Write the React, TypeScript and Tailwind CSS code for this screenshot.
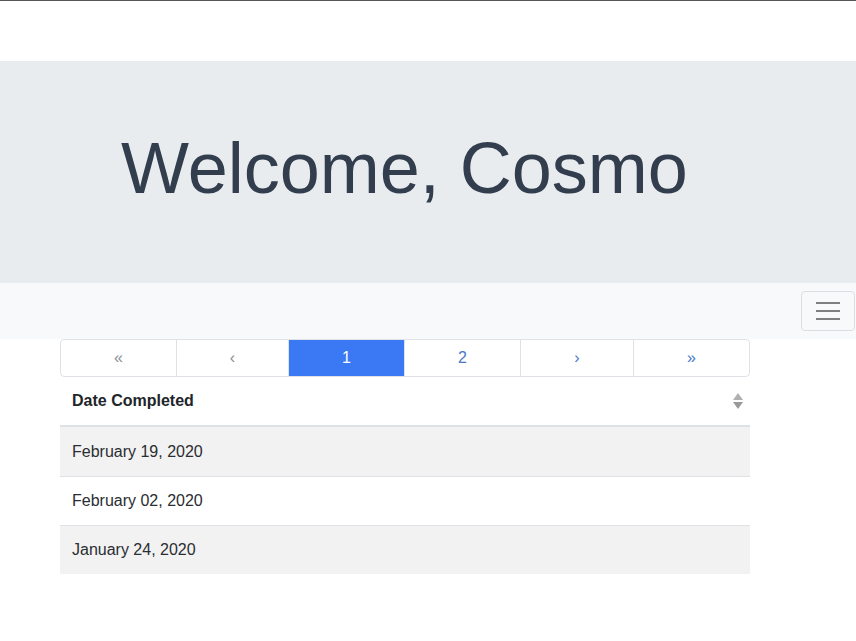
import React from "react";

const font = { fontFamily: '"Liberation Sans", Arial, sans-serif' };

function SortIcon() {
  return (
    <svg width="12" height="18" viewBox="0 0 12 18" className="block">
      <polygon points="6,1 11,8 1,8" fill="#b0b0b0" />
      <polygon points="1,10 11,10 6,17" fill="#9a9a9a" />
    </svg>
  );
}

export default function App() {
  const pages = [
    { label: "«", cls: "text-[#8a8f96]" },
    { label: "‹", cls: "text-[#8a8f96]" },
    { label: "1", cls: "bg-[#3a78f4] text-white border-[#3a78f4]" },
    { label: "2", cls: "text-[#4a78c8]" },
    { label: "›", cls: "text-[#4a78c8]" },
    { label: "»", cls: "text-[#4a78c8]" },
  ];
  const rows = ["February 19, 2020", "February 02, 2020", "January 24, 2020"];
  return (
    <div className="w-[856px] min-h-[641px] bg-white overflow-hidden" style={font}>
      <div className="h-px bg-[#555555]" />
      <div className="h-[60px]" />
      <div className="bg-[#e9ecef] pt-16 pb-16 pl-[121px]">
        <h1 className="text-[72px] leading-[1.2] mb-2 text-[#323e4e] font-normal whitespace-nowrap">
          Welcome, Cosmo
        </h1>
      </div>
      <div className="bg-[#f8f9fa] h-[56px] flex items-center justify-end">
        <button className="w-[54px] h-[40px] border border-[#dcdde0] rounded-[4px] flex flex-col items-center justify-center gap-[6px] mr-px">
          <span className="block w-6 h-[2px] bg-[#7f7f7f]" />
          <span className="block w-6 h-[2px] bg-[#7f7f7f]" />
          <span className="block w-6 h-[2px] bg-[#7f7f7f]" />
        </button>
      </div>
      <div className="ml-[60px] w-[690px]">
        <div className="grid grid-cols-[115px_112px_116px_116px_113px_116px] h-[38px] border border-[#dee2e6] rounded-[4px] overflow-hidden">
          {pages.map((p, i) => (
            <div
              key={i}
              className={`flex items-center justify-center text-base ${i > 0 ? "border-l border-[#dee2e6]" : ""} ${p.cls}`}
            >
              {p.label}
            </div>
          ))}
        </div>
        <div className="flex items-center justify-between h-[50px] pl-3 pr-[6px] border-b-2 border-[#dee2e6] text-[#212529] font-bold text-base">
          <span>Date Completed</span>
          <SortIcon />
        </div>
        {rows.map((r, i) => (
          <div
            key={r}
            className={`h-[49px] flex items-center px-3 text-base text-[#2a2d31] ${i > 0 ? "border-t border-[#dee2e6]" : ""} ${i % 2 === 0 ? "bg-[#f2f2f2]" : "bg-white"}`}
          >
            {r}
          </div>
        ))}
      </div>
    </div>
  );
}
